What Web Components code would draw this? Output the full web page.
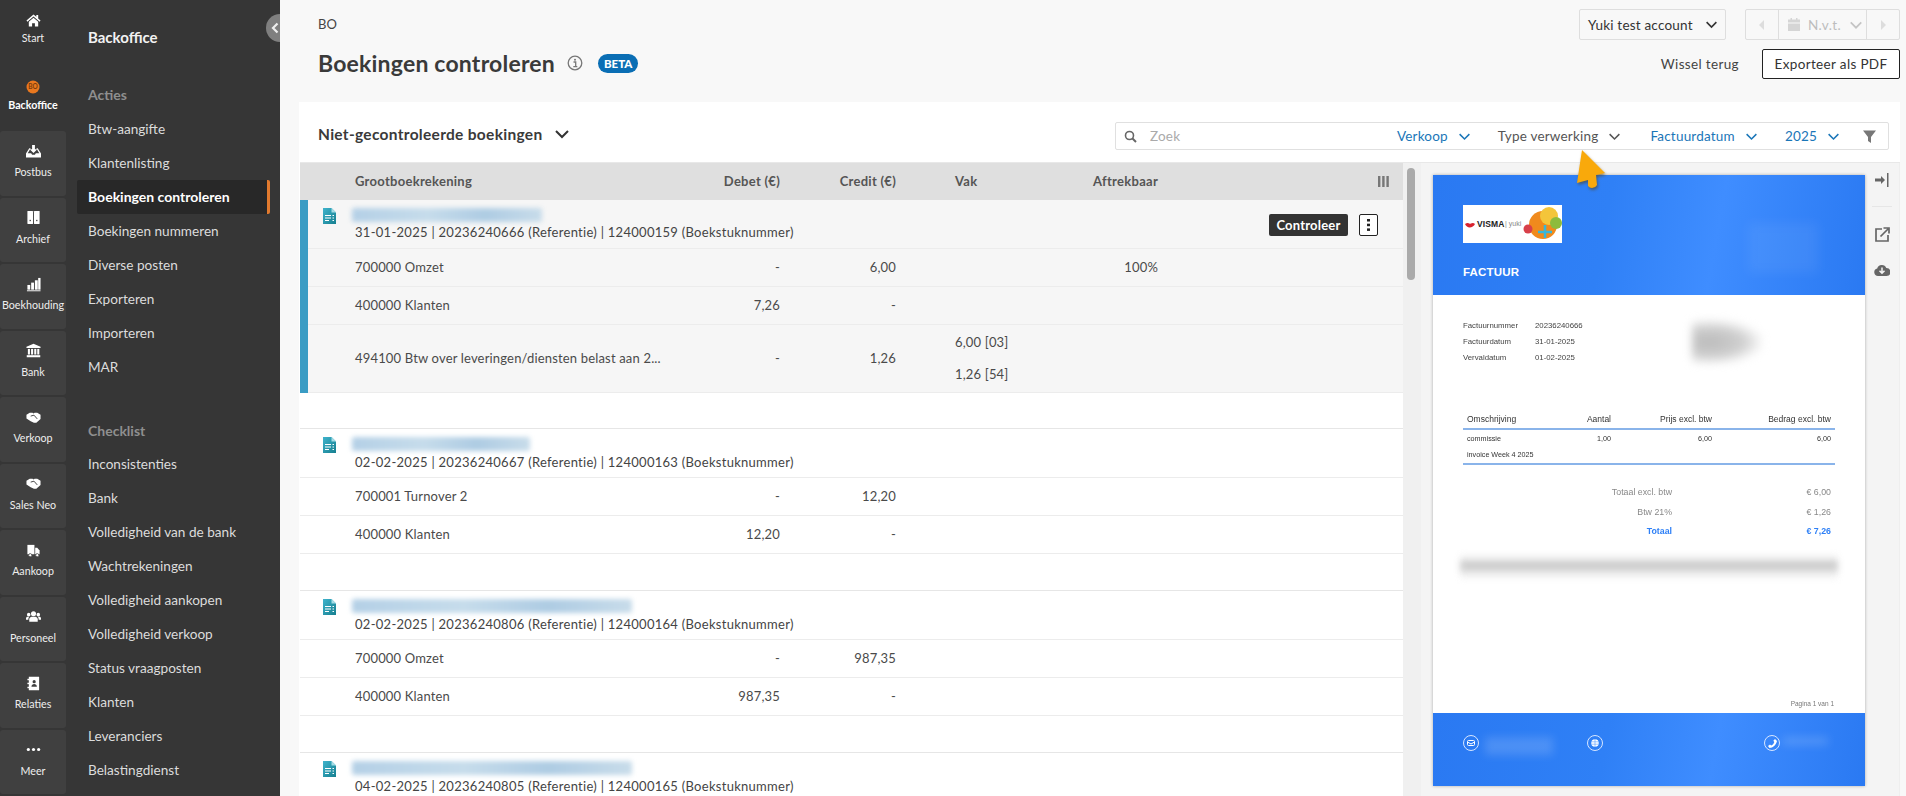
<!DOCTYPE html>
<html lang="nl">
<head>
<meta charset="utf-8">
<title>Boekingen controleren</title>
<style>
  html, body { margin: 0; height: 100%; overflow: hidden; }
  body { font-family: Lato, "Open Sans", sans-serif; background: #f8f8f8; }
  app-shell { height: 796px; }
</style>
</head>
<body>
<app-shell>
  <rail-menu slot="rail">
    <rail-item icon="home" plain>Start</rail-item>
    <rail-item icon="bo" plain active>Backoffice</rail-item>
    <rail-item icon="inbox">Postbus</rail-item>
    <rail-item icon="archive">Archief</rail-item>
    <rail-item icon="bars">Boekhouding</rail-item>
    <rail-item icon="bank">Bank</rail-item>
    <rail-item icon="shake">Verkoop</rail-item>
    <rail-item icon="shake">Sales Neo</rail-item>
    <rail-item icon="truck">Aankoop</rail-item>
    <rail-item icon="users">Personeel</rail-item>
    <rail-item icon="book">Relaties</rail-item>
    <rail-item icon="dots">Meer</rail-item>
  </rail-menu>
  <side-nav slot="nav" heading="Backoffice">
    <nav-section>Acties</nav-section>
    <nav-item>Btw-aangifte</nav-item>
    <nav-item>Klantenlisting</nav-item>
    <nav-item active>Boekingen controleren</nav-item>
    <nav-item>Boekingen nummeren</nav-item>
    <nav-item>Diverse posten</nav-item>
    <nav-item>Exporteren</nav-item>
    <nav-item>Importeren</nav-item>
    <nav-item>MAR</nav-item>
    <nav-section second>Checklist</nav-section>
    <nav-item>Inconsistenties</nav-item>
    <nav-item>Bank</nav-item>
    <nav-item>Volledigheid van de bank</nav-item>
    <nav-item>Wachtrekeningen</nav-item>
    <nav-item>Volledigheid aankopen</nav-item>
    <nav-item>Volledigheid verkoop</nav-item>
    <nav-item>Status vraagposten</nav-item>
    <nav-item>Klanten</nav-item>
    <nav-item>Leveranciers</nav-item>
    <nav-item>Belastingdienst</nav-item>
  </side-nav>
  <page-header slot="header"></page-header>
  <work-panel slot="panel">
    <filter-bar slot="toolbar"></filter-bar>
    <booking-table slot="table">
      <booking-group selected name-width="190" date="31-01-2025 | 20236240666 (Referentie) | 124000159 (Boekstuknummer)">
        <row-actions slot="actions"></row-actions>
        <booking-row account="700000 Omzet" debet="-" credit="6,00" aftrek="100%"></booking-row>
        <booking-row account="400000 Klanten" debet="7,26" credit="-"></booking-row>
        <booking-row tall account="494100 Btw over leveringen/diensten belast aan 2..." debet="-" credit="1,26" vak="6,00 [03]|1,26 [54]"></booking-row>
      </booking-group>
      <booking-group name-width="178" date="02-02-2025 | 20236240667 (Referentie) | 124000163 (Boekstuknummer)">
        <booking-row account="700001 Turnover 2" debet="-" credit="12,20"></booking-row>
        <booking-row account="400000 Klanten" debet="12,20" credit="-"></booking-row>
      </booking-group>
      <booking-group name-width="280" date="02-02-2025 | 20236240806 (Referentie) | 124000164 (Boekstuknummer)">
        <booking-row account="700000 Omzet" debet="-" credit="987,35"></booking-row>
        <booking-row account="400000 Klanten" debet="987,35" credit="-"></booking-row>
      </booking-group>
      <booking-group name-width="280" date="04-02-2025 | 20236240805 (Referentie) | 124000165 (Boekstuknummer)"></booking-group>
    </booking-table>
    <invoice-preview slot="preview"></invoice-preview>
  </work-panel>
  <mouse-pointer slot="overlay"></mouse-pointer>
</app-shell>

<script>
const ICONS = {
  home: '<path d="M8 1.500 0.500 8l1 1.200L8 3.600l6.500 5.600 1-1.200-2.500-2.200V2h-2v2.100z"/><path d="M3 9.300 8 5l5 4.300V14.500H9.500V11h-3v3.500H3z"/>',
  inbox: '<path d="M6.500 1h3v4.500H12L8 9.500 4 5.500h2.500z"/><path d="M3.500 4.500H5L1.800 9.800H5.500l1 1.700h3l1-1.700h3.700L11 4.500h1.500L16 10v4.500H0V10z"/>',
  archive: '<rect x="1.500" y="1" width="6" height="14" rx=".5"/><rect x="8.500" y="1" width="6" height="14" rx=".5"/><rect x="3.800" y="10.500" width="1.400" height="1.400" fill="#404040"/><rect x="10.800" y="10.500" width="1.400" height="1.400" fill="#404040"/>',
  bars: '<rect x="1.500" y="8.500" width="3" height="5"/><rect x="5.500" y="6" width="3" height="7.500"/><rect x="9.500" y="3.500" width="3" height="10"/><rect x="13" y="1" width="2.500" height="12.500"/><rect x="1" y="14.200" width="14.500" height="1"/>',
  bank: '<path d="M8 .8 15.500 4v1.300H.5V4z"/><rect x="2" y="6.300" width="2.200" height="6"/><rect x="5.400" y="6.300" width="2.200" height="6"/><rect x="8.800" y="6.300" width="2.200" height="6"/><rect x="12" y="6.300" width="2.200" height="6"/><rect x=".8" y="13" width="14.400" height="2.200"/>',
  shake: '<path d="M.5 5 4 3h3l1 .7L9.200 3H12l3.500 2v4.500L11 13.500H8.500L5 12 .5 9z"/><path d="M5 6.500l3.500-1 3.500 4" fill="none" stroke="#404040" stroke-width="1"/>',
  truck: '<path d="M1.500 2H9v10H1.500z"/><path d="M9.800 5H12l2.500 3v4H9.800z"/><circle cx="4.500" cy="13" r="1.700" stroke="#404040" stroke-width=".8"/><circle cx="12" cy="13" r="1.700" stroke="#404040" stroke-width=".8"/>',
  users: '<circle cx="8" cy="5" r="2.700"/><circle cx="2.900" cy="6" r="1.900"/><circle cx="13.100" cy="6" r="1.900"/><path d="M3.500 13.500V11c0-1.800 1.500-2.700 2.500-2.700h4c1 0 2.500.9 2.500 2.700v2.500z"/><path d="M0 11.500V10c0-1 .8-1.700 1.700-1.700h1.800c-.6.600-1 1.500-1 2.700v.5zM16 11.500V10c0-1-.8-1.700-1.700-1.700h-1.800c.6.600 1 1.500 1 2.700v.5z"/>',
  book: '<path d="M3 .8h11v14.400H3z"/><rect x="1.500" y="3" width="2.500" height="1.500"/><rect x="1.500" y="7.200" width="2.500" height="1.500"/><rect x="1.500" y="11.500" width="2.500" height="1.500"/><circle cx="8.700" cy="6" r="1.700" fill="#404040"/><path d="M5.800 11.500c0-2 1.400-3 2.900-3s2.900 1 2.900 3z" fill="#404040"/>',
  dots: '<circle cx="2.500" cy="8" r="1.700"/><circle cx="8" cy="8" r="1.700"/><circle cx="13.500" cy="8" r="1.700"/>'
};

function chevron(size, color, weight) {
  return `<svg width="${size}" height="${size}" viewBox="0 0 12 12" fill="none" aria-hidden="true"><path d="M1.500 3.800 6 8.300l4.500-4.500" stroke="${color}" stroke-width="${weight || 1.300}"/></svg>`;
}

/* base class: every element sets its shadow markup once */
class ShadowEl extends HTMLElement {
  connectedCallback() {
    if (this.shadowRoot) return;
    this.attachShadow({ mode: 'open' }).innerHTML = this.markup();
  }
  attr(n, d = '') { return this.hasAttribute(n) ? this.getAttribute(n) : d; }
}

class AppShell extends ShadowEl {
  markup() {
    return `<style>
      :host { display: flex; position: relative; overflow: hidden; width: 100%; }
      main { flex: 1; min-width: 0; display: flex; flex-direction: column; background: #f8f8f8; }
      ::slotted([slot=panel]) { flex: 1; min-height: 0; }
    </style>
    <slot name="rail"></slot><slot name="nav"></slot>
    <main><slot name="header"></slot><slot name="panel"></slot></main>
    <slot name="overlay"></slot>`;
  }
}

class RailMenu extends ShadowEl {
  markup() {
    return `<style>
      :host { display: flex; flex-direction: column; width: 66px; flex: none; background: #363636; }
    </style><slot></slot>`;
  }
}

class RailItem extends ShadowEl {
  markup() {
    const icon = this.attr('icon');
    const glyph = icon === 'bo'
      ? `<svg width="14" height="14" viewBox="0 0 14 14"><circle cx="7" cy="7" r="6.500" fill="#e9781f"/><text x="7" y="9.300" font-size="6.500" text-anchor="middle" fill="#7a3c0c" font-family="Lato">BO</text></svg>`
      : `<svg width="15" height="15" viewBox="0 0 16 16" fill="#fff">${ICONS[icon]}</svg>`;
    return `<style>
      :host { display: flex; flex-direction: column; align-items: center; height: 64.500px; margin-bottom: 2px; box-sizing: border-box;
        padding-top: 12px; background: #404040; border-radius: 3px; color: #eee; font-size: 10.700px; }
      :host([plain]) { background: none; height: 63.500px; }
      :host([active]) { color: #fff; font-weight: 700; padding-top: 13px; }
      .i { height: 16px; display: flex; align-items: center; }
      .t { margin-top: 6px; line-height: 14px; white-space: nowrap; }
      :host([plain]) .t { margin-top: 3px; }
    </style><div class="i">${glyph}</div><div class="t"><slot></slot></div>`;
  }
}

class SideNav extends ShadowEl {
  markup() {
    return `<style>
      :host { display: block; width: 214px; flex: none; box-sizing: border-box; background: #363636; padding-left: 11px; position: relative; }
      h2 { margin: 0; height: 77px; padding: 26px 0 0 11px; box-sizing: border-box; font-size: 15px; line-height: 22px; font-weight: 700; color: #f2f2f2; }
      .toggle { position: absolute; right: -14px; top: 14px; width: 28px; height: 28px; border-radius: 50%; background: #7f7f7f; clip-path: inset(0 14px 0 0); }
      .toggle svg { position: absolute; left: 4px; top: 8px; }
    </style>
    <h2>${this.attr('heading')}</h2>
    <slot></slot>
    <div class="toggle"><svg width="10" height="12" viewBox="0 0 10 12" fill="none"><path d="M7.500 1.500 3 6l4.500 4.500" stroke="#eee" stroke-width="2.200"/></svg></div>`;
  }
}

class NavSection extends ShadowEl {
  markup() {
    return `<style>
      :host { display: block; height: 35px; line-height: 35px; padding-left: 11px; font-size: 14px; font-weight: 700; color: #8f8f8f; }
      :host([second]) { margin-top: 30px; height: 33px; line-height: 33px; }
    </style><slot></slot>`;
  }
}

class NavItem extends ShadowEl {
  markup() {
    return `<style>
      :host { display: block; width: 193px; height: 34px; box-sizing: border-box; line-height: 34px; padding-left: 11px;
        font-size: 13.600px; color: #dcdcdc; white-space: nowrap; border-radius: 2px; }
      :host([active]) { background: #282828; color: #fff; font-weight: 700; font-size: 14px; border-right: 3px solid #e27a2e; }
    </style><slot></slot>`;
  }
}

class PageHeader extends ShadowEl {
  markup() {
    return `<style>
      :host { display: flex; justify-content: space-between; height: 102px; flex: none; box-sizing: border-box; padding: 9px 6px 0 38px; color: #3c3c3c; }
      .crumb { font-size: 13px; line-height: 30px; color: #444; }
      .title { display: flex; align-items: center; margin-top: 7px; height: 34px; }
      h1 { margin: 0; font-size: 23px; font-weight: 700; color: #3a3a3a; letter-spacing: .2px; }
      .info { margin-left: 12px; }
      .beta { margin-left: 15px; background: #0a6eb4; color: #fff; font-size: 11.500px; font-weight: 900; border-radius: 10px; padding: 0 6px; line-height: 19px; }
      .right { display: flex; flex-direction: column; align-items: flex-end; gap: 9px; }
      .line { display: flex; align-items: center; }
      .box { display: flex; align-items: center; height: 31px; box-sizing: border-box; border: 1px solid #dedede; border-radius: 2px; font-size: 13.500px; color: #333; }
      .acct { width: 147px; padding-left: 8px; gap: 12px; margin-right: 19px; letter-spacing: .2px; }
      .period { width: 155px; color: #bdbdbd; letter-spacing: .4px; }
      .period > div { height: 100%; display: flex; align-items: center; justify-content: center; }
      .period > div + div { border-left: 1px solid #dedede; }
      .swap { font-size: 13.500px; margin-right: 23px; letter-spacing: .35px; color: #444; }
      .pdf { height: 30px; width: 138px; box-sizing: border-box; border: 1px solid #222; border-radius: 2px; background: #fff; font: inherit; font-size: 13.500px; letter-spacing: .35px; color: #333; padding: 0; }
    </style>
    <div>
      <div class="crumb">BO</div>
      <div class="title">
        <h1>Boekingen controleren</h1>
        <svg class="info" width="16" height="16" viewBox="0 0 16 16" fill="none"><circle cx="8" cy="8" r="6.800" stroke="#777" stroke-width="1.300"/><circle cx="8" cy="4.800" r="1" fill="#777"/><path d="M6.500 7h2.200v4.500M6.300 11.600h4" stroke="#777" stroke-width="1.300"/></svg>
        <span class="beta">BETA</span>
      </div>
    </div>
    <div class="right">
      <div class="line">
        <div class="box acct"><span>Yuki test account</span>${chevron(13, '#333', 1.500)}</div>
        <div class="box period">
          <div style="width:32px"><svg width="6" height="10" viewBox="0 0 6 10" fill="#ddd"><path d="M5 0v10L0 5z"/></svg></div>
          <div style="flex:1;gap:8px;padding-left:6px;box-sizing:border-box"><svg width="12" height="13" viewBox="0 0 12 13" fill="#d5d5d5"><path d="M2.500 0h1.500v1.500h4V0h1.500v1.500H12V4.500H0V1.500h2.500zM0 5.500h12V13H0z"/></svg><span>N.v.t.</span>${chevron(14, '#c4c4c4', 1.500)}</div>
          <div style="width:32px"><svg width="6" height="10" viewBox="0 0 6 10" fill="#ddd"><path d="M1 0v10l5-5z"/></svg></div>
        </div>
      </div>
      <div class="line"><span class="swap">Wissel terug</span><button class="pdf">Exporteer als PDF</button></div>
    </div>`;
  }
}

class WorkPanel extends ShadowEl {
  markup() {
    return `<style>
      :host { display: flex; flex-direction: column; margin: 0 6px 0 19px; background: #fff; overflow: hidden; }
      .top { flex: none; height: 60px; box-sizing: border-box; padding: 20px 11px 0 19px; display: flex; justify-content: space-between; }
      .scope { display: flex; align-items: center; gap: 12px; height: 24px; font-size: 15.500px; font-weight: 700; color: #3a3a3a; letter-spacing: .3px; }
      .body { flex: 1; min-height: 0; display: flex; border-top: 1px solid #e8e8e8; margin-left: 1px; }
      ::slotted([slot=table]) { width: 1103px; flex: none; }
      ::slotted([slot=preview]) { flex: 1; min-width: 0; }
      .track { width: 18px; flex: none; background: #f0f0f0; position: relative; }
      .thumb { position: absolute; left: 4px; top: 5px; width: 8px; height: 112px; border-radius: 4px; background: #aaa; }
    </style>
    <div class="top">
      <div class="scope"><span>Niet-gecontroleerde boekingen</span>${chevron(16, '#333', 1.500)}</div>
      <slot name="toolbar"></slot>
    </div>
    <div class="body">
      <slot name="table"></slot>
      <div class="track"><div class="thumb"></div></div>
      <slot name="preview"></slot>
    </div>`;
  }
}

class FilterBar extends ShadowEl {
  markup() {
    const f = (label, gap, dim) => `<span class="f${dim ? ' dim' : ''}" style="margin-right:${gap}px">${label}<span class="c">${chevron(13, dim ? '#555' : '#1a76b8', 1.400)}</span></span>`;
    return `<style>
      :host { display: flex; align-items: center; width: 774px; height: 28px; box-sizing: border-box; border: 1px solid #e0e0e0; border-radius: 2px; font-size: 13.500px; letter-spacing: .2px; }
      .s { width: 34px; display: flex; justify-content: center; padding-right: 6px; box-sizing: border-box; }
      .q { flex: 1; color: #aaa; }
      .f { display: inline-flex; align-items: center; color: #1a76b8; white-space: nowrap; }
      .f.dim { color: #555; }
      .c { margin-left: 10px; display: flex; }
      .filter { margin-right: 12px; display: flex; }
    </style>
    <div class="s"><svg width="13" height="13" viewBox="0 0 13 13" fill="none"><circle cx="5.500" cy="5.500" r="4" stroke="#666" stroke-width="1.600"/><path d="M8.500 8.500 12 12" stroke="#666" stroke-width="2"/></svg></div>
    <div class="q">Zoek</div>
    ${f('Verkoop', 27)}${f('Type verwerking', 29, true)}${f('Factuurdatum', 27)}${f('2025', 23)}
    <div class="filter"><svg width="13" height="13" viewBox="0 0 13 13" fill="#777"><path d="M0 .5h13L8 7v6L5 11V7z"/></svg></div>`;
  }
}

/* gutter, account, debet, credit, gap, vak, aftrekbaar, rest */
const TABLE_COLS = '55px 315px 110px 116px 59px 138px 65px 1fr';

class BookingTable extends ShadowEl {
  markup() {
    return `<style>
      :host { display: block; overflow: hidden; background: #fff; }
      .head { display: grid; grid-template-columns: ${TABLE_COLS}; height: 37px; box-sizing: border-box; padding-bottom: 1px; align-items: center; background: #dfdfdf; font-size: 13px; font-weight: 700; color: #555; letter-spacing: .28px; white-space: nowrap; }
      .r { text-align: right; }
      .bars { justify-self: end; margin-right: 14px; display: flex; }
    </style>
    <div class="head">
      <span></span><span>Grootboekrekening</span><span class="r">Debet (€)</span><span class="r">Credit (€)</span>
      <span style="grid-column:6">Vak</span><span style="grid-column:7">Aftrekbaar</span>
      <span class="bars" style="grid-column:8"><svg width="11" height="11" viewBox="0 0 11 11" fill="#777"><rect width="2.400" height="11"/><rect x="4.200" width="2.400" height="11"/><rect x="8.400" width="2.400" height="11"/></svg></span>
    </div>
    <slot></slot>`;
  }
}

class BookingGroup extends ShadowEl {
  markup() {
    return `<style>
      :host { display: block; position: relative; border-top: 1px solid #e6e6e6; margin-bottom: 36px; }
      :host([selected]) { border-top: 0; background: #f6f6f6; margin-bottom: 35px; }
      :host([selected])::after { content: ""; position: absolute; left: 0; top: 0; bottom: 0; width: 8px; background: #3a9cc4; }
      .h { display: flex; height: 49px; box-sizing: border-box; padding-top: 7px; border-bottom: 1px solid #ececec; position: relative; }
      .doc { margin: 1px 19px 0 23px; flex: none; }
      .name { height: 14px; margin: 1px 0 0 -3px; border-radius: 2px; filter: blur(2.500px); background: linear-gradient(90deg, #b4d0e6, #c6dceb 40%, #aecce3 70%, #c8dcea); }
      .date { font-size: 13px; line-height: 17px; color: #444; letter-spacing: .28px; margin-top: 3px; white-space: nowrap; }
      :host([selected]) .date { margin-top: 2px; }
      .act { position: absolute; right: 25px; top: 14px; }
    </style>
    <div class="h">
      <svg class="doc" width="13" height="16" viewBox="0 0 13 16"><defs><linearGradient id="g" x1="0" y1="0" x2="1" y2="1"><stop offset="0" stop-color="#3fb3cc"/><stop offset="1" stop-color="#167f8f"/></linearGradient></defs><path d="M0 0h8.500L13 4.500V16H0z" fill="url(#g)"/><path d="M8.500 0v4.500H13z" fill="#a5dde6"/><path d="M2 7.500h6M2 10h6M2 12.500h4M9.500 7.500h1.500M9.500 10h1.500M9.500 12.500h1.500" stroke="#fff" stroke-width="1"/></svg>
      <div>
        <div class="name" style="width:${this.attr('name-width')}px"></div>
        <div class="date">${this.attr('date')}</div>
      </div>
      <div class="act"><slot name="actions"></slot></div>
    </div>
    <slot></slot>`;
  }
}

class BookingRow extends ShadowEl {
  markup() {
    const vak = this.attr('vak').split('|').filter(Boolean).map(v => `<div>${v}</div>`).join('');
    return `<style>
      :host { display: grid; grid-template-columns: ${TABLE_COLS}; grid-template-rows: 1fr; height: 38px; box-sizing: border-box; padding-bottom: 1px; align-items: center; border-bottom: 1px solid #ececec; font-size: 13px; color: #4a4a4a; letter-spacing: .17px; }
      :host([tall]) { height: 68px; }
      span, .vak { grid-row: 1; }
      .acc { grid-column: 2 / 4; white-space: nowrap; }
      .deb { grid-column: 3; text-align: right; }
      .cre { grid-column: 4; text-align: right; }
      .vak { grid-column: 6; line-height: 32px; }
      .aft { grid-column: 7; text-align: right; }
    </style>
    <span class="acc">${this.attr('account')}</span><span class="deb">${this.attr('debet')}</span><span class="cre">${this.attr('credit')}</span>
    <div class="vak">${vak}</div><span class="aft">${this.attr('aftrek')}</span>`;
  }
}

class RowActions extends ShadowEl {
  markup() {
    return `<style>
      :host { display: flex; gap: 11px; }
      .go { width: 79px; height: 22px; border: 0; border-radius: 2px; background: #333; color: #fff; font: 700 13px Lato, sans-serif; letter-spacing: .2px; padding: 0; }
      .more { width: 19px; height: 22px; box-sizing: border-box; border: 1px solid #222; border-radius: 2px; background: #fff; padding: 0; display: flex; align-items: center; justify-content: center; }
    </style>
    <button class="go">Controleer</button>
    <button class="more"><svg width="3" height="12" viewBox="0 0 3 12" fill="#222"><rect width="3" height="2.500"/><rect y="4.700" width="3" height="2.500"/><rect y="9.400" width="3" height="2.500"/></svg></button>`;
  }
}

class InvoicePreview extends ShadowEl {
  markup() {
    return `<style>
      :host { display: flex; background: #f4f4f4; overflow: hidden; border-right: 1px solid #eee; }
      .sheet { width: 432px; height: 611px; margin: 12px 0 0 12px; flex: none; background: #fff; box-shadow: 0 0 3px rgba(0,0,0,.3); display: flex; flex-direction: column;
        font-family: "Liberation Sans", Arial, sans-serif; font-size: 7.800px; color: #444; filter: blur(.25px); }
      .band { background: linear-gradient(100deg, #2a79f2 0%, #2f80f6 40%, #3f8dff 65%, #2a79f2 100%); }
      .top { height: 120px; flex: none; padding: 30px 30px 0; box-sizing: border-box; position: relative; }
      .logo { width: 99px; height: 38px; background: #fff; position: relative; overflow: hidden; display: block; }
      .logo b { position: absolute; left: 14px; top: 14px; font-size: 8.500px; color: #222; letter-spacing: .1px; }
      .logo i { position: absolute; left: 42px; top: 15px; font-size: 7px; font-style: normal; color: #888; }
      .logo svg { position: absolute; left: 0; top: 0; }
      .inv { margin-top: 23px; color: #fff; font-size: 11.500px; font-weight: 700; letter-spacing: .2px; }
      .smudge { position: absolute; background: rgba(255,255,255,.06); filter: blur(6px); }
      .meta { display: grid; grid-template-columns: 72px 1fr; padding: 23px 30px 0; line-height: 16px; position: relative; height: 115px; box-sizing: border-box; align-content: start; }
      .addr { position: absolute; left: 259px; top: 25px; width: 70px; height: 44px; background: radial-gradient(ellipse at 25% 50%, #bbb 0%, #cfcfcf 45%, rgba(255,255,255,0) 75%); filter: blur(4px); }
      table { margin: 0 30px; width: 372px; table-layout: fixed; border-collapse: collapse; font-size: 8.500px; color: #333; }
      th { font-weight: 400; text-align: right; padding: 0 4px; height: 18px; border-bottom: 2px solid #8ab4ea; white-space: nowrap; }
      th:first-child, td:first-child { text-align: left; }
      td { text-align: right; padding: 0 4px; height: 16.500px; font-size: 7.200px; white-space: nowrap; }
      tr.last td { border-bottom: 2px solid #8ab4ea; }
      .totals { margin: 18px 34px 0 0; display: grid; grid-template-columns: 239px 159px; font-size: 8.800px; line-height: 19.500px; color: #888; text-align: right; justify-content: end; }
      .totals .blue { color: #2f80f6; font-weight: 700; }
      .blur { height: 24px; margin: 13px 27px 0; background: linear-gradient(#f0f0f0 15%, #bbb 35%, #ccc 60%, #f4f4f4 85%); filter: blur(3px); opacity: .8; }
      .grow { flex: 1; display: flex; align-items: flex-end; justify-content: flex-end; padding: 0 31px 6px; font-size: 6.500px; color: #777; }
      .foot { height: 73px; flex: none; position: relative; }
      .c { position: absolute; top: 22px; width: 16px; height: 16px; border: 1px solid #d7e6ff; border-radius: 50%; box-sizing: border-box; display: flex; align-items: center; justify-content: center; }
      .tools { flex: 1; display: flex; flex-direction: column; align-items: center; padding-top: 10px; }
      .sep { width: 20px; border-top: 1px solid #e6e6e6; margin: 19px 0 20px; }
    </style>
    <div class="sheet">
      <div class="band top">
        <div class="logo">
          <svg width="99" height="38" viewBox="0 0 99 38"><path d="M2 19c3-2 5 0 5 0s3-2 5 0c-2 4-8 5-10 0z" fill="#d8232f"/><circle cx="80" cy="20" r="14" fill="#f08a1d"/><circle cx="86" cy="11" r="9" fill="#f4c53a"/><circle cx="93" cy="18" r="6" fill="#8dbb3c"/><circle cx="65" cy="24" r="4.500" fill="#d8404a"/><path d="M82 20v13M75 27h14" stroke="#38b6d8" stroke-width="2.500"/></svg>
          <b>VISMA</b><i>| yuki</i>
        </div>
        <div class="inv">FACTUUR</div>
        <div class="smudge" style="left:315px;top:48px;width:70px;height:50px"></div>
      </div>
      <div class="meta">
        <span>Factuurnummer</span><span>20236240666</span>
        <span>Factuurdatum</span><span>31-01-2025</span>
        <span>Vervaldatum</span><span>01-02-2025</span>
        <div class="addr"></div>
      </div>
      <table>
        <colgroup><col style="width:110px"><col style="width:42px"><col style="width:101px"><col style="width:119px"></colgroup>
        <tr><th>Omschrijving</th><th>Aantal</th><th>Prijs excl. btw</th><th>Bedrag excl. btw</th></tr>
        <tr><td>commissie</td><td>1,00</td><td>6,00</td><td>6,00</td></tr>
        <tr class="last"><td>invoice Week 4 2025</td><td></td><td></td><td></td></tr>
      </table>
      <div class="totals">
        <span>Totaal excl. btw</span><span>€ 6,00</span>
        <span>Btw 21%</span><span>€ 1,26</span>
        <span class="blue">Totaal</span><span class="blue">€ 7,26</span>
      </div>
      <div class="blur"></div>
      <div class="grow">Pagina 1 van 1</div>
      <div class="band foot">
        <div class="c" style="left:30px"><svg width="8" height="6" viewBox="0 0 8 6" fill="none" stroke="#fff"><rect x=".5" y=".5" width="7" height="5" rx="1"/><path d="M.5 2 4 4l3.500-2"/></svg></div>
        <div class="c" style="left:154px"><svg width="8" height="8" viewBox="0 0 8 8"><circle cx="4" cy="4" r="3.800" fill="#fff"/><path d="M0 2.800h8M0 5.200h8M4 0v8" stroke="#3f8dff" stroke-width=".5"/></svg></div>
        <div class="c" style="left:331px"><svg width="9" height="9" viewBox="0 0 9 9" fill="#fff"><path d="M7 0 9 2C8 6 5 9 1.500 9L0 7l2-1.500 1.200 1C4.500 6 6 4.500 6.300 3L5.300 1.800z"/></svg></div>
        <div class="smudge" style="left:52px;top:24px;width:68px;height:18px;background:rgba(255,255,255,.15);filter:blur(4px)"></div>
        <div class="smudge" style="left:350px;top:24px;width:45px;height:8px;background:rgba(255,255,255,.15);filter:blur(4px)"></div>
      </div>
    </div>
    <div class="tools">
      <svg width="14" height="14" viewBox="0 0 14 14" fill="#666"><path d="M0 5.500h6V3l4 4-4 4V8.500H0z"/><rect x="12" y="0" width="1.500" height="14"/></svg>
      <div class="sep"></div>
      <svg width="15" height="15" viewBox="0 0 15 15" fill="none" stroke="#666" stroke-width="1.700"><path d="M7 2H1v12h12V8"/><path d="M5.500 9.500 13 2M8.500 1h5.500v5.500" /></svg>
      <svg style="margin-top:22px" width="16" height="12" viewBox="0 0 16 12"><path d="M4 12a3.800 3.800 0 0 1-.8-7.500A4.800 4.800 0 0 1 12.300 4 4 4 0 0 1 12.500 12z" fill="#666"/><path d="M8 3.500V9M5.500 6.800 8 9.300l2.500-2.500" stroke="#f4f4f4" stroke-width="1.500" fill="none"/></svg>
    </div>`;
  }
}

class MousePointer extends ShadowEl {
  markup() {
    return `<style>
      :host { position: absolute; left: 1570px; top: 145px; display: block; pointer-events: none; }
      svg { display: block; filter: drop-shadow(1px 2px 1.500px rgba(90,60,0,.55)); }
    </style>
    <svg width="42" height="52" viewBox="0 0 42 52"><path d="M12 5 35 28 26 30 27 40a5.500 5.500 0 0 1-9 1L18 35 7 38z" fill="#f9a90b"/></svg>`;
  }
}

customElements.define('app-shell', AppShell);
customElements.define('rail-menu', RailMenu);
customElements.define('rail-item', RailItem);
customElements.define('side-nav', SideNav);
customElements.define('nav-section', NavSection);
customElements.define('nav-item', NavItem);
customElements.define('page-header', PageHeader);
customElements.define('work-panel', WorkPanel);
customElements.define('filter-bar', FilterBar);
customElements.define('booking-table', BookingTable);
customElements.define('booking-group', BookingGroup);
customElements.define('booking-row', BookingRow);
customElements.define('row-actions', RowActions);
customElements.define('invoice-preview', InvoicePreview);
customElements.define('mouse-pointer', MousePointer);
</script>
</body>
</html>
